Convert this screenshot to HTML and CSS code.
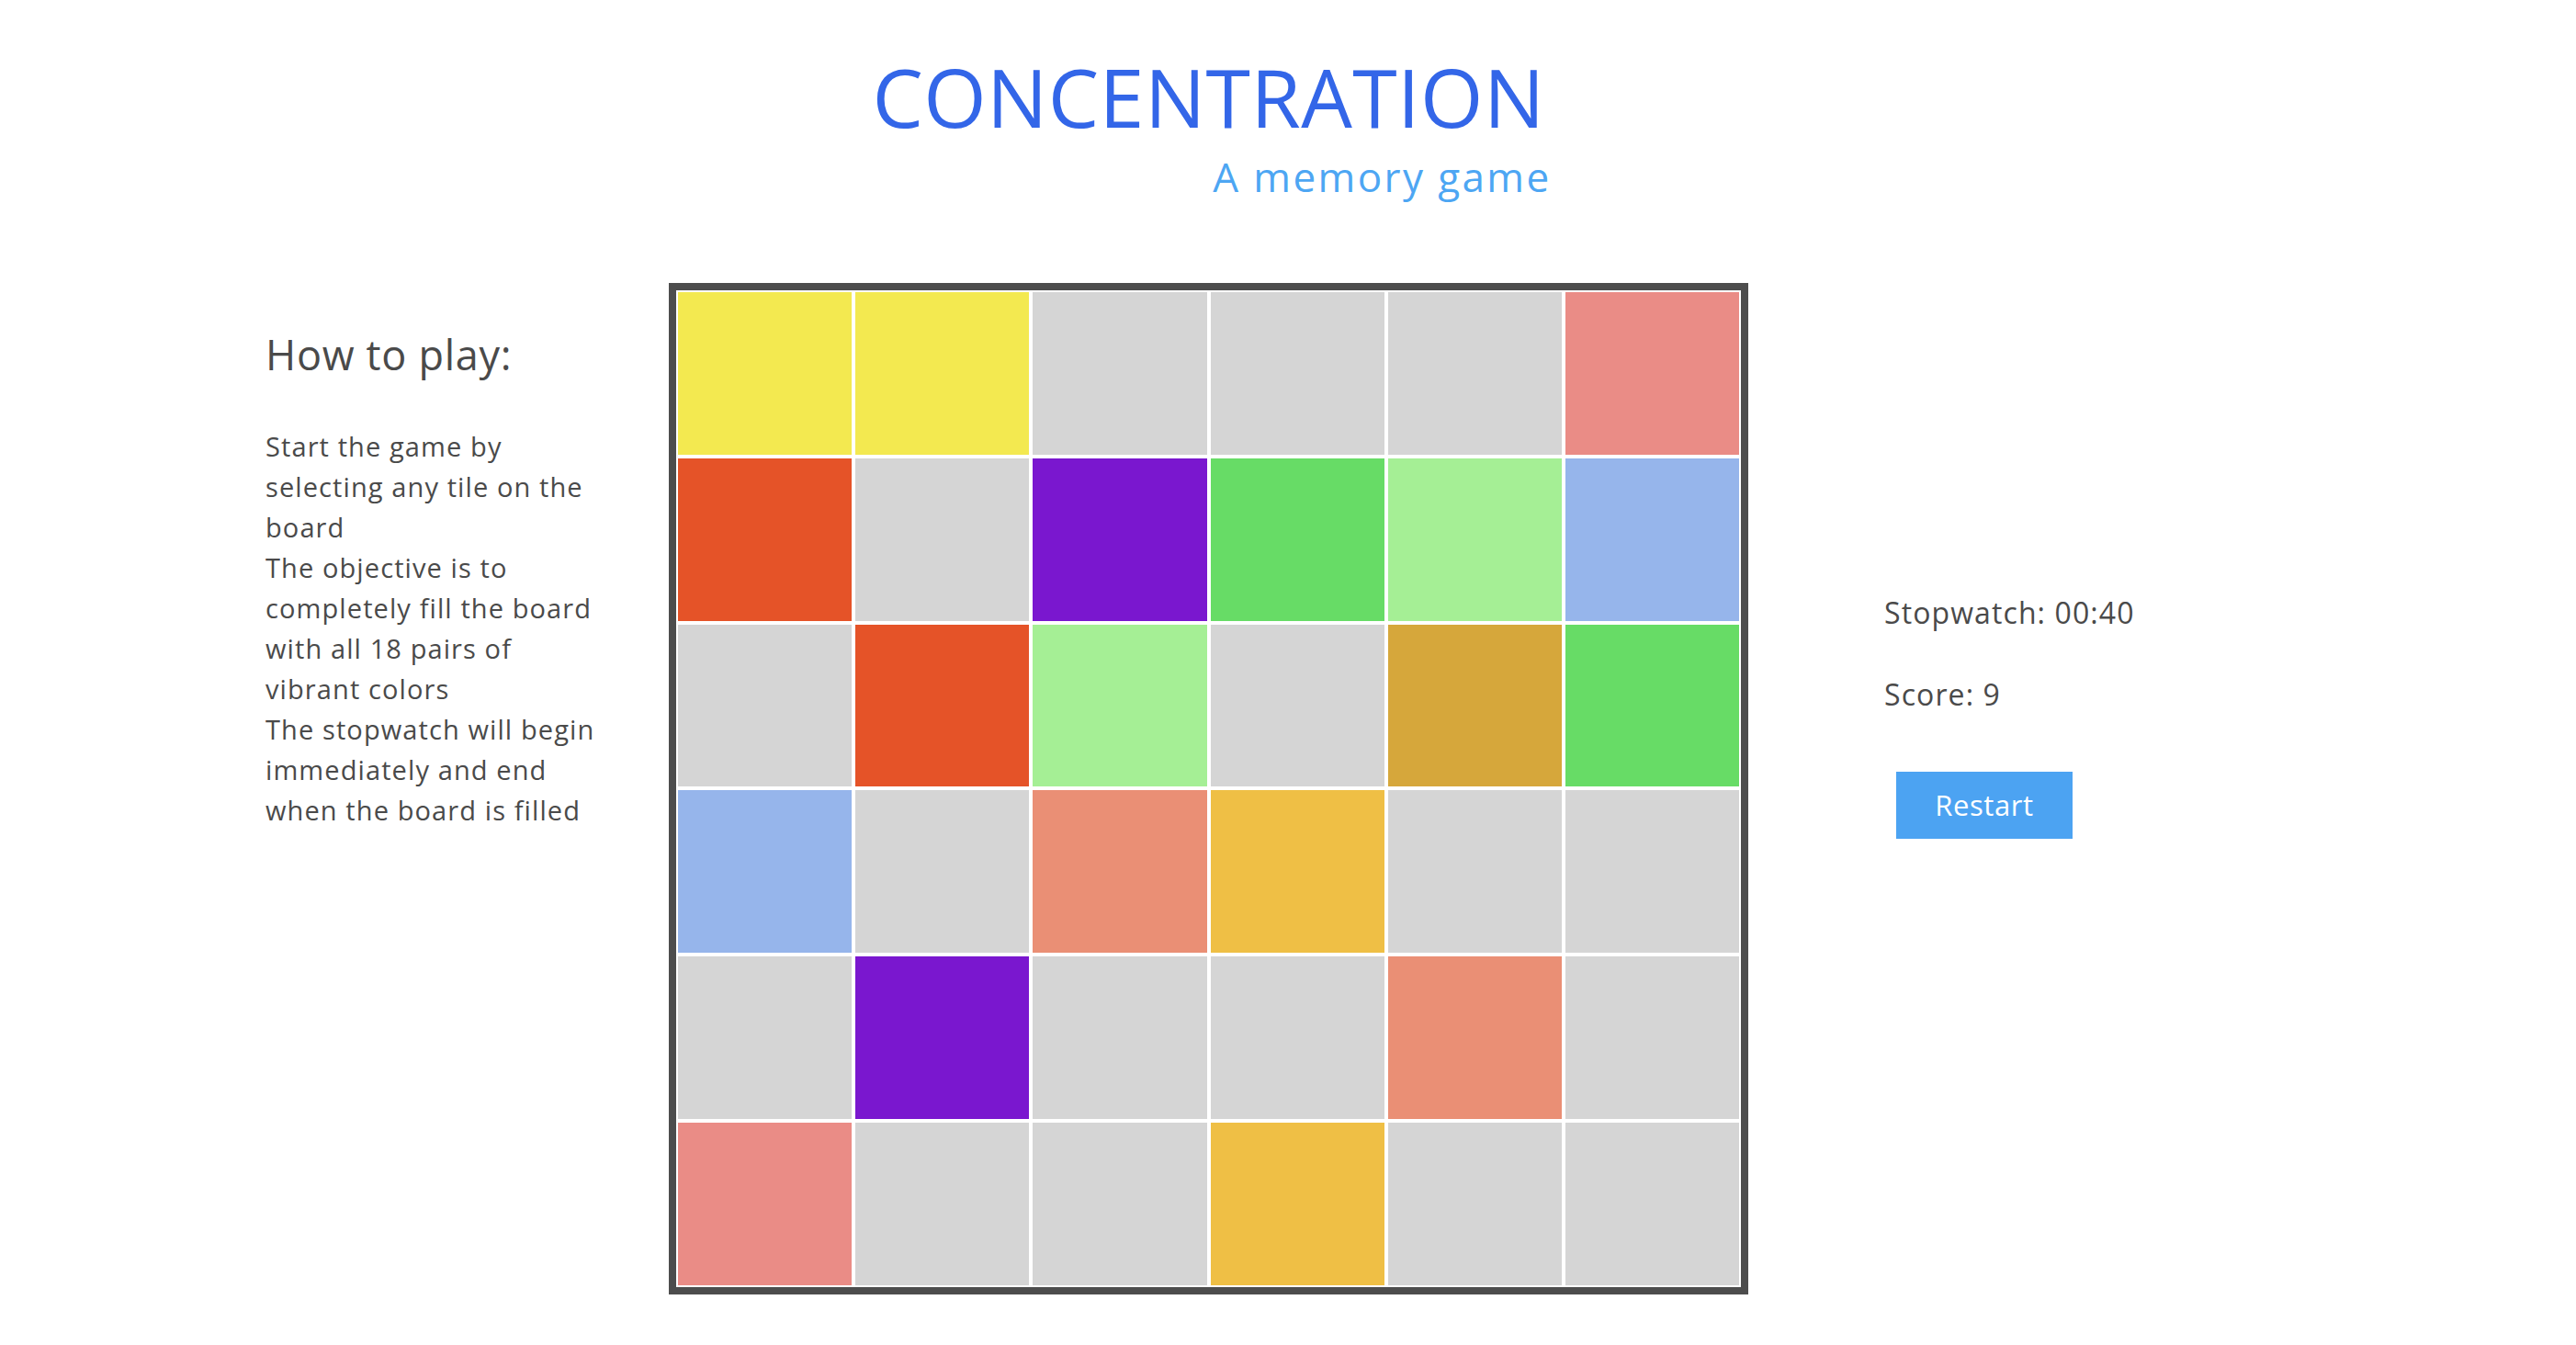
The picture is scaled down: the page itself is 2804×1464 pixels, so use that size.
FILE: index.html
```html
<!DOCTYPE html>
<html lang="en">
<head>
<meta charset="utf-8">
<title>Concentration</title>
<link rel="stylesheet" href="styles.css">
</head>
<body>
<div class="page">
  <header class="header">
    <div class="brand">
      <h1 class="title">CONCENTRATION</h1>
      <p class="subtitle">A memory game</p>
    </div>
  </header>

  <aside class="howto">
    <h2 class="howto-title">How to play:</h2>
    <p class="howto-text">Start the game by<br>selecting any tile on the<br>board<br>The objective is to<br>completely fill the board<br>with all 18 pairs of<br>vibrant colors<br>The stopwatch will begin<br>immediately and end<br>when the board is filled</p>
  </aside>

  <main class="board">
    <div class="tile c-yellow"></div>
    <div class="tile c-yellow"></div>
    <div class="tile"></div>
    <div class="tile"></div>
    <div class="tile"></div>
    <div class="tile c-pink"></div>

    <div class="tile c-orange"></div>
    <div class="tile"></div>
    <div class="tile c-purple"></div>
    <div class="tile c-green"></div>
    <div class="tile c-lime"></div>
    <div class="tile c-blue"></div>

    <div class="tile"></div>
    <div class="tile c-orange"></div>
    <div class="tile c-lime"></div>
    <div class="tile"></div>
    <div class="tile c-gold"></div>
    <div class="tile c-green"></div>

    <div class="tile c-blue"></div>
    <div class="tile"></div>
    <div class="tile c-salmon"></div>
    <div class="tile c-amber"></div>
    <div class="tile"></div>
    <div class="tile"></div>

    <div class="tile"></div>
    <div class="tile c-purple"></div>
    <div class="tile"></div>
    <div class="tile"></div>
    <div class="tile c-salmon"></div>
    <div class="tile"></div>

    <div class="tile c-pink"></div>
    <div class="tile"></div>
    <div class="tile"></div>
    <div class="tile c-amber"></div>
    <div class="tile"></div>
    <div class="tile"></div>
  </main>

  <aside class="stats">
    <p class="stat">Stopwatch: 00:40</p>
    <p class="stat stat-score">Score: 9</p>
    <button class="restart" type="button">Restart</button>
  </aside>
</div>
</body>
</html>
```

FILE: styles.css
```css
html, body {
  margin: 0;
  padding: 0;
  background: #ffffff;
}

body {
  font-family: "Open Sans", "Liberation Sans", sans-serif;
  color: #4a4a4a;
}

.page {
  display: grid;
  grid-template-columns: 728px 1175px 1fr;
  grid-template-rows: auto auto;
}

/* Header */
.header {
  grid-column: 2;
  grid-row: 1;
  display: flex;
  justify-content: center;
  padding-top: 61px;
  padding-bottom: 94px;
}

.brand {
  display: flex;
  flex-direction: column;
  align-items: flex-end;
}

.title {
  margin: 0;
  font-size: 88px;
  line-height: 1;
  font-weight: 400;
  color: #3366e8;
  letter-spacing: 0.4px;
}

.subtitle {
  margin: 21px -7px 0 0;
  font-size: 44px;
  line-height: 1;
  font-weight: 400;
  color: #4da6f3;
  letter-spacing: 2.4px;
}

/* How to play */
.howto {
  grid-column: 1;
  grid-row: 2;
  padding: 55px 0 0 289px;
}

.howto-title {
  margin: 0;
  font-size: 45px;
  line-height: 1;
  font-weight: 400;
  letter-spacing: 0.7px;
}

.howto-text {
  margin: 56px 0 0 0;
  font-size: 29px;
  line-height: 44px;
  white-space: nowrap;
  letter-spacing: 1.1px;
}

/* Board */
.board {
  grid-column: 2;
  grid-row: 2;
  width: 1159px;
  height: 1085px;
  border: 8px solid #4d4d4d;
  background: #ffffff;
  display: grid;
  grid-template-columns: repeat(6, 1fr);
  grid-template-rows: repeat(6, 1fr);
}

.tile {
  margin: 2px;
  background: #d5d5d5;
}

.c-yellow { background: #f3e950; }
.c-pink   { background: #ea8c86; }
.c-orange { background: #e55328; }
.c-purple { background: #7a17cf; }
.c-green  { background: #67dc66; }
.c-lime   { background: #a5ef95; }
.c-blue   { background: #96b5eb; }
.c-gold   { background: #d6a73b; }
.c-salmon { background: #ea8f75; }
.c-amber  { background: #efbf45; }

/* Stats */
.stats {
  grid-column: 3;
  grid-row: 2;
  padding: 343px 0 0 148px;
  display: flex;
  flex-direction: column;
  align-items: flex-start;
}

.stat {
  margin: 0;
  font-size: 32px;
  line-height: 1;
  letter-spacing: 1.1px;
}

.stat-score {
  margin-top: 57px;
}

.restart {
  margin: 68px 0 0 13px;
  width: 192px;
  height: 73px;
  padding: 0;
  border: none;
  border-radius: 0;
  background: #4ca3f2;
  color: #ffffff;
  font-family: "Open Sans", "Liberation Sans", sans-serif;
  font-size: 31px;
  line-height: 1;
  letter-spacing: 0.6px;
}
```
